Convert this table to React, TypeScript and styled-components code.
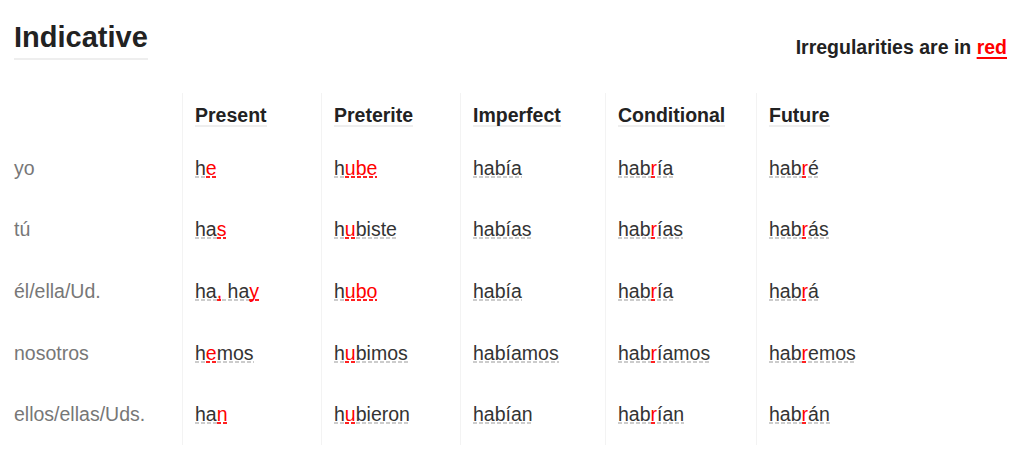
import React from 'react';
import styled, { createGlobalStyle } from 'styled-components';

const GlobalStyle = createGlobalStyle`
  body {
    margin: 0;
    background: #ffffff;
    font-family: "Liberation Sans", Arial, sans-serif;
  }
`;

const tenses = ['Present', 'Preterite', 'Imperfect', 'Conditional', 'Future'];

const pronouns = ['yo', 'tú', 'él/ella/Ud.', 'nosotros', 'ellos/ellas/Uds.'];

// [x] marks the irregular part of a form
const forms: string[][] = [
  ['h[e]', 'h[ube]', 'había', 'hab[r]ía', 'hab[r]é'],
  ['ha[s]', 'h[u]biste', 'habías', 'hab[r]ías', 'hab[r]ás'],
  ['ha[,] ha[y]', 'h[ubo]', 'había', 'hab[r]ía', 'hab[r]á'],
  ['h[e]mos', 'h[u]bimos', 'habíamos', 'hab[r]íamos', 'hab[r]emos'],
  ['ha[n]', 'h[u]bieron', 'habían', 'hab[r]ían', 'hab[r]án'],
];

const splitForm = (form: string) => {
  const parts: { text: string; irregular: boolean }[] = [];
  const re = /\[([^\]]+)\]|([^[]+)/g;
  let m: RegExpExecArray | null;
  while ((m = re.exec(form))) {
    if (m[1]) parts.push({ text: m[1], irregular: true });
    else parts.push({ text: m[2], irregular: false });
  }
  return parts;
};

const App: React.FC = () => {
  return (
    <Page>
      <GlobalStyle />
      <TitleRow>
        <Title>Indicative</Title>
        <Legend>
          Irregularities are in <RedWord>red</RedWord>
        </Legend>
      </TitleRow>
      <Table>
        <HeadCell $first />
        {tenses.map((t) => (
          <HeadCell key={t}>
            <HeadText>{t}</HeadText>
          </HeadCell>
        ))}
        {pronouns.map((p, i) => (
          <React.Fragment key={p}>
            <PronounCell>{p}</PronounCell>
            {forms[i].map((f, j) => (
              <FormCell key={j}>
                <span>
                  {splitForm(f).map((part, k) => (
                    <Segment key={k} $irregular={part.irregular}>
                      {part.text}
                    </Segment>
                  ))}
                </span>
              </FormCell>
            ))}
          </React.Fragment>
        ))}
      </Table>
    </Page>
  );
};

export default App;

const Page = styled.div`
  padding: 20px 17px 0 14px;
  height: 455px;
  box-sizing: border-box;
  overflow: hidden;
`;

const TitleRow = styled.div`
  display: flex;
  justify-content: space-between;
  align-items: flex-start;
`;

const Title = styled.h2`
  margin: 0;
  display: inline-block;
  font-size: 29px;
  line-height: 34px;
  font-weight: 700;
  color: #222222;
  padding-bottom: 4px;
  border-bottom: 2px solid #eeeeee;
`;

const Legend = styled.div`
  margin-top: 16px;
  font-size: 19.5px;
  line-height: 22px;
  font-weight: 700;
  color: #222222;
`;

const RedWord = styled.span`
  color: #ff0000;
  text-decoration: underline;
  text-decoration-thickness: 2px;
  text-underline-offset: 3px;
`;

const Table = styled.div`
  margin-top: 33px;
  display: grid;
  grid-template-columns: 168px 139px 139px 145px 151px 1fr;
  grid-template-rows: 44px repeat(5, 61.6px);
`;

const HeadCell = styled.div<{ $first?: boolean }>`
  padding: 12px 0 0 12px;
  border-left: ${(p) => (p.$first ? 'none' : '1px solid #f3f3f3')};
`;

const HeadText = styled.span`
  display: inline-block;
  font-size: 19.5px;
  line-height: 20px;
  font-weight: 700;
  color: #222222;
  border-bottom: 2px solid #eeeeee;
`;

const PronounCell = styled.div`
  display: flex;
  align-items: center;
  font-size: 19.5px;
  line-height: 22px;
  color: #777777;
`;

const FormCell = styled.div`
  display: flex;
  align-items: center;
  padding-left: 12px;
  border-left: 1px solid #f3f3f3;
  font-size: 19.5px;
  line-height: 22px;
  color: #333333;
`;

const Segment = styled.span<{ $irregular: boolean }>`
  color: ${(p) => (p.$irregular ? '#ff0000' : '#333333')};
  background: repeating-linear-gradient(
      90deg,
      ${(p) => (p.$irregular ? '#ff2020' : '#cccccc')} 0 4px,
      transparent 4px 6px
    )
    0 calc(100% - 1px) / 100% 2px no-repeat;
`;
